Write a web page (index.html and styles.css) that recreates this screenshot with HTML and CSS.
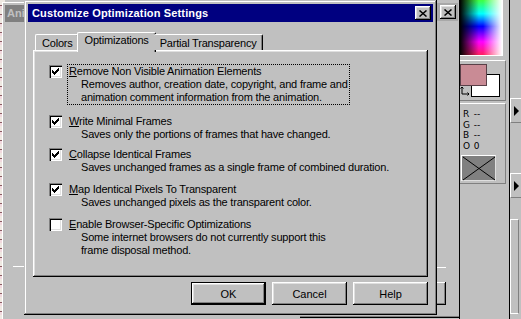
FILE: index.html
```html
<!DOCTYPE html>
<html lang="en">
<head>
    <meta charset="UTF-8">
    <title>Customize Optimization Settings</title>
    <link rel="stylesheet" href="styles.css">
</head>
<body>
    <div class="strip"></div>
    <div class="win-ani">
        <div class="ani-title">Ani</div>
        <div class="ani-rule"></div>
    </div>

    <div class="win-back">
        <div class="back-title">
            <span class="close-btn">
                <svg width="8" height="7" viewBox="0 0 8 7"><path d="M0.5 0.5l7 6M7.5 0.5l-7 6" stroke="#000" stroke-width="1.5"/></svg>
            </span>
        </div>
        <div class="back-edge"></div>
        <div class="back-btn"></div>
    </div>

    <div class="palette">
        <div class="spectrum"></div>
        <div class="swatches">
            <div class="swatch-bg"></div>
            <div class="swatch-fg"></div>
            <svg class="swap" width="11" height="10" viewBox="0 0 11 10">
                <path d="M2 1v7h7M0.5 2.5L2 1l1.5 1.5M7.5 6.5L9 8l-1.5 1.5" fill="none" stroke="#000" stroke-width="1"/>
            </svg>
        </div>
        <div class="readout">
            <div class="rgb"><span>R</span> --</div>
            <div class="rgb"><span>G</span> --</div>
            <div class="rgb"><span>B</span> --</div>
            <div class="rgb"><span>O</span> 0</div>
            <div class="nocolor">
                <svg width="34" height="25" viewBox="0 0 34 25"><path d="M1 1L33 24M33 1L1 24" stroke="#000" stroke-width="1"/></svg>
            </div>
        </div>
    </div>

    <div class="dock">
        <div class="dock-btn top-btn"><span class="arrow"></span></div>
        <div class="dock-btn mid-btn"><span class="arrow"></span></div>
        <div class="dock-panel"></div>
    </div>

    <div class="dialog">
        <div class="title-bar">
            <span>Customize Optimization Settings</span>
            <span class="close-btn">
                <svg width="8" height="7" viewBox="0 0 8 7"><path d="M0.5 0.5l7 6M7.5 0.5l-7 6" stroke="#000" stroke-width="1.5"/></svg>
            </span>
        </div>

        <div class="tabs">
            <div class="tab">Colors</div>
            <div class="tab on">Optimizations</div>
            <div class="tab">Partial Transparency</div>
        </div>

        <div class="panel">
            <div class="opt">
                <span class="check on"><svg width="13" height="13" viewBox="0 0 13 13"><path d="M3 5H4V6H5V7H6V6H7V5H8V4H9V3H10V6H9V7H8V8H7V9H6V10H5V9H4V8H3Z"/></svg></span>
                <div class="opt-text focus">
                    <div><u>R</u>emove Non Visible Animation Elements</div>
                    <div class="desc">Removes author, creation date, copyright, and frame and<br>animation comment information from the animation.</div>
                </div>
            </div>
            <div class="opt">
                <span class="check on"><svg width="13" height="13" viewBox="0 0 13 13"><path d="M3 5H4V6H5V7H6V6H7V5H8V4H9V3H10V6H9V7H8V8H7V9H6V10H5V9H4V8H3Z"/></svg></span>
                <div class="opt-text">
                    <div><u>W</u>rite Minimal Frames</div>
                    <div class="desc">Saves only the portions of frames that have changed.</div>
                </div>
            </div>
            <div class="opt">
                <span class="check on"><svg width="13" height="13" viewBox="0 0 13 13"><path d="M3 5H4V6H5V7H6V6H7V5H8V4H9V3H10V6H9V7H8V8H7V9H6V10H5V9H4V8H3Z"/></svg></span>
                <div class="opt-text">
                    <div><u>C</u>ollapse Identical Frames</div>
                    <div class="desc">Saves unchanged frames as a single frame of combined duration.</div>
                </div>
            </div>
            <div class="opt">
                <span class="check on"><svg width="13" height="13" viewBox="0 0 13 13"><path d="M3 5H4V6H5V7H6V6H7V5H8V4H9V3H10V6H9V7H8V8H7V9H6V10H5V9H4V8H3Z"/></svg></span>
                <div class="opt-text">
                    <div><u>M</u>ap Identical Pixels To Transparent</div>
                    <div class="desc">Saves unchanged pixels as the transparent color.</div>
                </div>
            </div>
            <div class="opt">
                <span class="check"></span>
                <div class="opt-text">
                    <div><u>E</u>nable Browser-Specific Optimizations</div>
                    <div class="desc">Some internet browsers do not currently support this<br>frame disposal method.</div>
                </div>
            </div>
        </div>

        <div class="buttons">
            <button class="btn default">OK</button>
            <button class="btn">Cancel</button>
            <button class="btn">Help</button>
        </div>
    </div>
</body>
</html>
```

FILE: styles.css
```css
* {
    box-sizing: border-box;
}
body {
    margin: 0;
    width: 521px;
    height: 319px;
    overflow: hidden;
    position: relative;
    background: #c0c0c0;
    font-family: 'Liberation Sans', Arial, sans-serif;
    font-size: 11px;
    color: #000;
}

/* windows behind the dialog */
.strip {
    position: absolute;
    left: 0;
    top: 0;
    width: 5px;
    height: 319px;
    background: repeating-linear-gradient(to bottom, #efe9e2 0, #efe9e2 5px, #8a5a62 5px, #8a5a62 6px, #f2d9de 6px, #f2d9de 9px);
}
.win-ani {
    position: absolute;
    left: 2px;
    top: 2px;
    width: 40px;
    height: 330px;
    background: #c0c0c0;
    box-shadow: inset 1px 1px #fff;
    padding: 3px 0 0 3px;
}
.ani-title {
    height: 17px;
    background: #808080;
    color: #c0c0c0;
    font-weight: bold;
    padding: 2px 0 0 2px;
}
.ani-rule {
    margin: 244px 0 0 8px;
    height: 1px;
    background: #fff;
}
.win-back {
    position: absolute;
    left: 300px;
    top: 0;
    width: 162px;
    height: 318px;
    background: #c0c0c0;
    padding: 3px 4px;
    box-shadow: inset -1px -1px #000, inset -2px -2px #808080;
}
.back-title {
    height: 18px;
    background: #a8a8a8;
    display: flex;
    justify-content: flex-end;
    align-items: center;
    padding-right: 2px;
}
.back-edge {
    position: absolute;
    left: 136px;
    top: 43px;
    width: 10px;
    height: 225px;
    border-left: 1px solid #fff;
    border-bottom: 1px solid #fff;
}
.back-btn {
    position: absolute;
    left: 130px;
    top: 282px;
    width: 16px;
    height: 23px;
    box-shadow: inset -1px -1px #000, inset 0 1px #fff, inset -2px -2px #808080;
}

.palette {
    position: absolute;
    left: 459px;
    top: 0;
    width: 51px;
    height: 319px;
    background: #c0c0c0;
    border-left: 1px solid #000;
    border-right: 1px solid #000;
}
.spectrum {
    width: 43px;
    height: 56px;
    border-right: 1px solid #fff;
    border-bottom: 1px solid #fff;
    background:
        linear-gradient(to right, #000 0%, rgba(0, 0, 0, 0) 45%, rgba(255, 255, 255, 0) 55%, #fff 100%),
        linear-gradient(to bottom, #40ff40 0%, #00ffff 25%, #0000ff 48%, #ff00ff 76%, #ff2060 100%);
}
.swatches {
    position: relative;
    margin-top: 4px;
    width: 46px;
    height: 41px;
    border-top: 1px solid #fff;
    border-right: 1px solid #808080;
    border-bottom: 1px solid #808080;
}
.swatch-bg {
    position: absolute;
    left: 11px;
    top: 13px;
    width: 29px;
    height: 23px;
    background: #fff;
    border: 1px solid #000;
}
.swatch-fg {
    position: absolute;
    left: 0;
    top: 3px;
    width: 27px;
    height: 22px;
    background: #c98b95;
    border: 1px solid #5a4048;
}
.swap {
    position: absolute;
    left: 0;
    top: 25px;
}
.readout {
    margin-top: 2px;
    width: 46px;
    height: 81px;
    padding: 5px 0 0 3px;
    border-top: 1px solid #fff;
    border-right: 1px solid #808080;
    border-bottom: 1px solid #808080;
    font-family: 'DejaVu Sans', sans-serif;
    font-size: 9px;
}
.rgb {
    height: 10.5px;
    line-height: 10px;
}
.rgb span {
    display: inline-block;
    width: 8px;
}
.nocolor {
    margin: 4px 0 0 -2px;
    width: 35px;
    height: 26px;
    background: #808080;
    border: 1px solid #fff;
    border-right-color: #dfdfdf;
    border-bottom-color: #dfdfdf;
}
.nocolor svg {
    display: block;
}

.dock {
    position: absolute;
    left: 510px;
    top: 0;
    width: 11px;
    height: 319px;
    background: #c0c0c0;
}
.dock-btn {
    position: absolute;
    left: 0;
    width: 11px;
    height: 25px;
    border-left: 1px solid #fff;
    border-top: 1px solid #fff;
    border-bottom: 1px solid #808080;
    display: flex;
    align-items: center;
    justify-content: center;
}
.top-btn {
    top: 98px;
}
.mid-btn {
    top: 173px;
}
.arrow {
    width: 0;
    height: 0;
    border-top: 5px solid transparent;
    border-bottom: 5px solid transparent;
    border-left: 5px solid #000;
}
.dock-panel {
    position: absolute;
    left: 0;
    top: 219px;
    width: 9px;
    height: 95px;
    border: 1px solid #fff;
    border-right-color: #808080;
}

/* the dialog */
.dialog {
    position: absolute;
    left: 24px;
    top: 0;
    width: 413px;
    height: 315px;
    background: #c0c0c0;
    padding: 4px;
    box-shadow: inset -1px -1px #000, inset 1px 1px #c0c0c0, inset -2px -2px #808080, inset 2px 2px #fff;
}
.title-bar {
    height: 18px;
    background: #000080;
    color: #fff;
    font-weight: bold;
    letter-spacing: 0.15px;
    display: flex;
    align-items: center;
    justify-content: space-between;
    padding: 0 2px 0 4px;
}
.close-btn {
    width: 16px;
    height: 14px;
    background: #c0c0c0;
    box-shadow: inset -1px -1px #000, inset 1px 1px #fff, inset -2px -2px #808080, inset 2px 2px #dfdfdf;
    display: flex;
    align-items: center;
    justify-content: center;
}
.close-btn svg {
    display: block;
}
.tabs {
    display: flex;
    align-items: flex-end;
    height: 18px;
    margin: 10px 0 0 7px;
    letter-spacing: -0.2px;
    position: relative;
    z-index: 1;
}
.tab {
    height: 16px;
    padding: 2px 5px 0 6px;
    line-height: 12px;
    background: #c0c0c0;
    border-top: 1px solid #fff;
    border-left: 1px solid #fff;
    border-right: 1px solid #000;
    border-radius: 2px 2px 0 0;
    box-shadow: inset -1px 0 #808080;
}
.tab.on {
    height: 20px;
    margin: 0 -2px -2px;
    padding: 1px 6px 0 7px;
}
.tab.on + .tab {
    border-left: none;
}
.panel {
    margin: 0 5px;
    height: 227px;
    padding: 14px 16px 0;
    letter-spacing: -0.2px;
    box-shadow: inset -1px -1px #000, inset 1px 1px #fff, inset -2px -2px #808080, inset 2px 2px #dfdfdf;
}
.opt {
    display: flex;
    align-items: flex-start;
    margin-bottom: 7px;
}
.opt:first-child {
    margin-bottom: 9px;
}
.opt:nth-child(2) {
    margin-bottom: 5px;
}
.check {
    flex: none;
    width: 13px;
    height: 13px;
    margin: 1px 5px 0 0;
    background: #fff;
    box-shadow: inset 1px 1px #808080, inset 2px 2px #000, inset -1px -1px #fff, inset -2px -2px #dfdfdf;
}
.check svg {
    display: block;
}
.opt-text {
    border: 1px dotted transparent;
    padding: 0 1px;
    line-height: 13px;
}
.opt-text.focus {
    border-color: #000;
}
.desc {
    padding-left: 12px;
}
.buttons {
    display: flex;
    justify-content: flex-end;
    gap: 6px;
    margin: 5px 5px 0 0;
}
.btn {
    width: 75px;
    height: 23px;
    padding: 0;
    border: none;
    background: #c0c0c0;
    font-family: 'Liberation Sans', Arial, sans-serif;
    font-size: 11px;
    color: #000;
    box-shadow: inset -1px -1px #000, inset 1px 1px #fff, inset -2px -2px #808080, inset 2px 2px #dfdfdf;
}
.btn.default {
    box-shadow: inset 0 0 0 1px #000, inset -2px -2px #000, inset 2px 2px #fff, inset -3px -3px #808080, inset 3px 3px #dfdfdf;
}
```
